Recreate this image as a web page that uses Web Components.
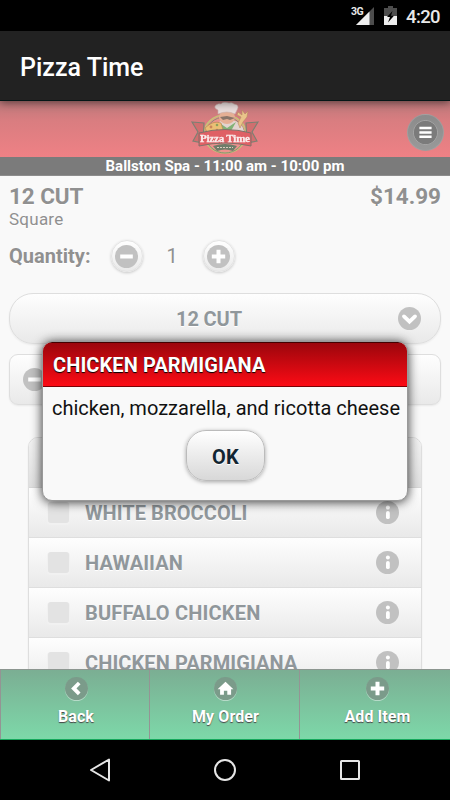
<!DOCTYPE html>
<html lang="en"><head><meta charset="utf-8"><title>Pizza Time</title>
<style>html,body{margin:0;height:100%;overflow:hidden;background:#000}</style></head><body>
<pizza-app></pizza-app>
<script>
const define=(name,html,setup)=>customElements.define(name,class extends HTMLElement{
  constructor(){super();this.attachShadow({mode:'open'}).innerHTML=html;}
  connectedCallback(){if(setup)setup(this,this.shadowRoot);}
});

/* Single line of text whose tracking is adjusted to span the width in "w". */
define('text-run','<style>:host{display:block;white-space:nowrap;line-height:1.2}span{display:inline-block}</style><span><slot></slot></span>',(el,root)=>{
  const s=root.querySelector('span'),w=+el.getAttribute('w');
  if(w){s.style.letterSpacing='0px';const d=w-s.getBoundingClientRect().width;const n=el.textContent.length;s.style.letterSpacing=(d/n)+'px';}
});

const glyphs={
  minus:'<path d="M5.2 11.5h12.6" stroke-width="4"/>',
  plus:'<path d="M4.8 11.5h13.4M11.5 4.8v13.4" stroke-width="4"/>',
  down:'<path d="M6 9.4l5.5 5.2L17 9.4" stroke-width="3.8" stroke-linecap="round"/>',
  left:'<path d="M14.2 6l-5.4 5.4 5.4 5.4" stroke-width="3.8"/>',
  home:'<path d="M3.6 12.2l7.9-7.4 7.9 7.4h-2.3v5.6h-3.8v-4h-3.4v4H6.1v-5.6z" fill="#fff" stroke="none"/>',
  info:'<circle cx="11.9" cy="6.6" r="2" fill="#fff" stroke="none"/><path d="M11.9 11.9v4.3" stroke-width="3.8" stroke-linecap="round"/>',
  bars:'<path d="M5.4 7h12.2M5.4 11.4h12.2M5.4 15.8h12.2" stroke-width="2.5"/>'
};
define('disc-icon','<style>:host{display:block;width:23px;height:23px;border-radius:50%;background:var(--disc,#c1c1c1);flex:none}svg{display:block}</style><svg width="23" height="23" fill="none" stroke="#fff"></svg>',(el,root)=>{
  root.querySelector('svg').innerHTML=glyphs[el.getAttribute('name')];
});

define('status-bar',`<style>:host{display:flex;height:31px;background:#000;color:#e8e8e8;justify-content:flex-end;align-items:flex-start;box-sizing:border-box;padding-right:10px}
.g{font-size:10.5px;font-weight:700;padding-top:6px}.c{font-size:18.5px;font-weight:500;padding-top:5.5px;margin-left:9px}svg{display:block}.s{margin:7px 0 0 -7px}.b{margin:6px 0 0 10px}</style>
<text-run class="g" w="12">3G</text-run>
<svg class="s" width="18" height="18"><path d="M0 18L18 0v18z" fill="#4d4d4d"/><path d="M0 18L13.5 4.5V18z" fill="#eee"/></svg>
<svg class="b" width="13" height="19"><path d="M0 2h4V0h5v2h4v8H0z" fill="#4d4d4d"/><path d="M0 10h13v9H0z" fill="#eee"/><path d="M8.5 5L3 11h3l-2 5.5L10 9.8H7z" fill="#000"/></svg>
<text-run class="c" w="34">4:20</text-run>`);

define('action-bar',`<style>:host{display:flex;align-items:center;height:70px;background:#222;color:#fff;padding:4px 0 0 20px;box-sizing:border-box;font-size:25px;font-weight:500;border-bottom:1px solid #041516;position:relative;z-index:1;box-shadow:0 2px 8px #0007}</style><text-run w="123.5">Pizza Time</text-run>`);

define('pizza-logo',`<style>:host{display:block}svg{display:block;filter:blur(.5px);opacity:.86}text{font:700 11px "Liberation Serif",serif;stroke:#fff;stroke-width:.3px}</style>
<svg width="70" height="54" viewBox="0 0 70 54">
<ellipse cx="35" cy="32" rx="21" ry="19" fill="#ee9590" stroke="#c3cf76" stroke-width="1.6"/>
<ellipse cx="35" cy="33" rx="19.4" ry="18" fill="none" stroke="#7b9072" stroke-width="1"/>
<path d="M2 20l12 1-1 20-10-2 5-9zM68 20l-12 1 1 20 10-2-5-9z" fill="#ce6d6d" stroke="#6d8070" stroke-width="1.2"/>
<path d="M24 28q2-8 9-10h9q10 2 12 11z" fill="#e4e3dd"/>
<path d="M48 21l3-6-4-2 1-3 4 3 0-5 3 4 3-3-1 6-4 5-3 6z" fill="#edd08c" stroke="#b3895d" stroke-width=".6"/>
<ellipse cx="37" cy="15" rx="8" ry="7" fill="#e8b898"/>
<path d="M30 15l7-1 8 2-5 2-3-1-4 1z" fill="#7d7466"/>
<path d="M28 12V8q-5-2-2-5 3-2 5-1 2-3 8-1 3-1 5 1 6 1 3 6l-2 4q-8-4-17 0z" fill="#eeecea" stroke="#c9b9b3" stroke-width=".6"/>
<path d="M28 20l9 6 9-6-5 9h-9z" fill="#74bb75"/>
<path d="M15 26q8-8 16-5l3 10-17-1z" fill="#edca73" stroke="#b88850" stroke-width=".7"/>
<circle cx="21" cy="25" r="1.4" fill="#c98655"/><circle cx="27" cy="23" r="1.3" fill="#81a956"/><circle cx="27" cy="28" r="1.3" fill="#c98655"/>
<path d="M9 31q26-7 52 0v13q-26-6-52 0z" fill="#df5c61" stroke="#716f66" stroke-width="1"/>
<path d="M23 44q12-4 24 0l-4 5q-8-3-16 0z" fill="#5b7d66"/>
<path d="M27 45.5h16" stroke="#d9d8c8" stroke-width="1.2" stroke-dasharray="2 1"/>
<text x="35" y="39.8" text-anchor="middle" textLength="50" fill="#fff">Pizza Time</text></svg>`);

define('app-header',`<style>:host{display:block}.h{display:grid;grid-template-columns:1fr auto 1fr;height:56px;background:linear-gradient(#ba787a,#d97d80 35%,#ef8185)}
pizza-logo{margin-top:1px;width:70px;height:54px}.m{justify-self:end;align-self:center;margin:6px 6px 0 0;width:37px;height:37px;border-radius:50%;background:linear-gradient(#8b8b8b,#999);border:1px solid #aaa8;box-sizing:border-box;display:grid;place-items:center}
.m div{border:1px solid #aaa;border-radius:50%;background:#7b7b7b}
.h>div:last-child{--disc:#7b7b7b}.a{background:#7b7b7b;color:#fff;height:19px;box-sizing:border-box;border-bottom:1px solid #8d8d8d;font-size:15px;font-weight:700;display:flex;justify-content:center;align-items:center}</style>
<div class="h"><i></i><pizza-logo></pizza-logo><div class="m"><div><disc-icon name="bars"></disc-icon></div></div></div>
<div class="a"><text-run w="239">Ballston Spa - 11:00 am - 10:00 pm</text-run></div>`);

define('round-button',`<style>:host{display:grid;place-items:center;width:30px;height:30px;border:1px solid #e3e3e3;border-radius:50%;background:linear-gradient(#fff,#eaeaea);box-shadow:0 1px 3px #0003}</style><slot></slot>`);

define('item-summary',`<style>:host{display:block;padding:7px 9px 0;color:#909090;text-shadow:0 1px 0 #fff}
.t{display:flex;justify-content:space-between;font-size:22.5px;font-weight:700;height:26px}.s{font-size:17px;height:20px}
.q{display:flex;align-items:center;height:34px;margin-top:10px;font-size:20px}.q text-run:first-child{font-weight:700}.n{margin:0 24px 0 24px;font-size:20px}round-button:nth-of-type(1){margin-left:20px}</style>
<div class="t"><text-run w="74.5">12 CUT</text-run><text-run w="71">$14.99</text-run></div>
<div class="s"><text-run w="54.5">Square</text-run></div>
<div class="q"><text-run w="81.6">Quantity:</text-run><round-button><disc-icon name="minus"></disc-icon></round-button><text-run class="n" w="12">1</text-run><round-button><disc-icon name="plus"></disc-icon></round-button></div>`);

define('bar-button',`<style>:host{display:flex;align-items:center;justify-content:space-between;box-sizing:border-box;height:51px;margin:0 9px;padding:0 19px 0 13px;border:1px solid #dedede;background:linear-gradient(#fefefe,#e9e9e9);border-radius:var(--r,24px);box-shadow:0 1px 2px #0001;color:#90979b;font-size:20px;font-weight:700;text-shadow:0 1px #fff}</style><slot></slot>`);

define('topping-row',`<style>:host{display:flex;align-items:center;height:50px;box-sizing:border-box;padding:0 22px 0 19px;border-bottom:1px solid #dedede;background:linear-gradient(#fefefe,#e9e9e9);color:#90979b;font-size:20px;font-weight:700;text-shadow:0 1px #fff}
.c{width:21px;height:21px;background:#e3e3e3;border-radius:3px;margin-right:16px;box-shadow:0 1px 0 1px #f1f1f1}.l{flex:1}:host([head]){border-color:#d8d8d8;background:linear-gradient(#f2f2f2,#e0e0e0);height:50px}:host([head]) *{display:none}</style>
<div class="c"></div><div class="l"><slot></slot></div><disc-icon name="info"></disc-icon>`);

define('topping-list',`<style>:host{display:block;margin:32px 28px 0;border:1px solid #dedede;border-radius:10px 10px 0 0;overflow:hidden;box-shadow:0 1px 2px #0001}</style>
<topping-row head></topping-row><topping-row><text-run w="162.5">WHITE BROCCOLI</text-run></topping-row><topping-row><text-run w="98">HAWAIIAN</text-run></topping-row><topping-row><text-run w="175.5">BUFFALO CHICKEN</text-run></topping-row><topping-row><text-run w="212.5">CHICKEN PARMIGIANA</text-run></topping-row>`);

define('info-dialog',`<style>:host{display:block;box-sizing:border-box;width:366px;height:160px;border:1px solid #999;border-radius:10px;background:#f9f9f9;box-shadow:0 1px 11px #000c;overflow:hidden;color:#111}
.h{height:45px;box-sizing:border-box;padding:0 0 0 10px;background:linear-gradient(#9b060c,#fc0b15);border-bottom:1px solid #7c0005;border-top:1px solid #400;color:#fff;display:flex;align-items:center;font-weight:700;font-size:20px;text-shadow:0 1px 1px #000}
.t{padding:9px 0 0 9px;font-size:20px}.b{margin:10px auto 0;position:relative;width:79px;height:51px;box-sizing:border-box;border:1px solid #bbb;border-radius:20px;background:linear-gradient(#fff,#d8d8d8);box-shadow:0 1px 4px #0005;display:grid;place-items:center;font-size:20px;font-weight:700;color:#122532;text-shadow:0 1px #fff}.b text-run{padding:2px 0 0 1px}</style>
<div class="h"><text-run w="212.5">CHICKEN PARMIGIANA</text-run></div><div class="t"><text-run w="348">chicken, mozzarella, and ricotta cheese</text-run></div><div class="b"><text-run w="27">OK</text-run></div>`);

define('tab-item',`<style>:host{display:flex;flex-direction:column;align-items:center;box-sizing:border-box;border-left:1px solid #949494;padding:7px 0 0 2px;color:#fff;font-size:16px;font-weight:700;text-shadow:0 1px 1px #444;--disc:#7b9b8a}disc-icon{margin-bottom:7px;box-shadow:0 1px #b6dac8}</style><disc-icon></disc-icon><slot></slot>`,(el,root)=>{
  const i=document.createElement('disc-icon');i.setAttribute('name',el.getAttribute('icon'));root.querySelector('disc-icon').replaceWith(i);
});
define('tab-bar',`<style>:host{display:grid;grid-template-columns:149px 150px 151px;height:71px;box-sizing:border-box;background:linear-gradient(#7bae93,#7dd8a9);border-top:1px solid #8c9690;border-bottom:1px solid #16a85c}tab-item:last-child{padding-left:5px}</style>
<tab-item icon="left"><text-run w="36">Back</text-run></tab-item><tab-item icon="home"><text-run w="67">My Order</text-run></tab-item><tab-item icon="plus"><text-run w="66">Add Item</text-run></tab-item>`);

define('system-nav',`<style>:host{display:flex;justify-content:center;gap:102px;align-items:center;height:60px;background:#000}svg{display:block}</style>
<svg width="23" height="24" fill="none" stroke="#e6e6e6" stroke-width="2"><path d="M20 1.5v21L2 12z" stroke-linejoin="round"/></svg><svg width="23" height="24" fill="none" stroke="#e6e6e6" stroke-width="2"><circle cx="11" cy="12" r="10"/></svg><svg width="23" height="24" fill="none" stroke="#e6e6e6" stroke-width="2"><rect x="2" y="3" width="18" height="18" rx=".5"/></svg>`);

define('pizza-app',`<style>:host{display:flex;flex-direction:column;position:relative;width:450px;height:800px;overflow:hidden;font-family:Roboto,sans-serif;background:#000}
main{height:493px;background:#f9f9f9;overflow:hidden;flex:none}.sel{margin-top:20px}.sel text-run{margin-left:153px}.two{--r:9px;margin-top:10px}info-dialog{position:absolute;left:42px;top:341px}</style>
<status-bar></status-bar><action-bar></action-bar><app-header></app-header>
<main><item-summary></item-summary><bar-button class="sel"><text-run w="66">12 CUT</text-run><disc-icon name="down"></disc-icon></bar-button><bar-button class="two"><disc-icon name="minus"></disc-icon></bar-button><topping-list></topping-list></main>
<tab-bar></tab-bar><system-nav></system-nav><info-dialog></info-dialog>`);
</script></body></html>
